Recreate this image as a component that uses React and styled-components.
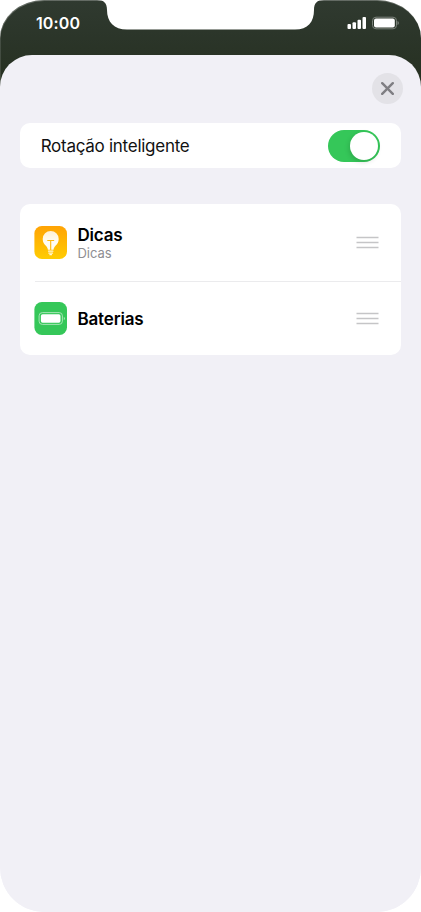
import React from "react";
import styled, { createGlobalStyle } from "styled-components";

const GlobalStyle = createGlobalStyle`
    * {
        box-sizing: border-box;
    }

    body {
        margin: 0;
        background: #fff;
        font-family: Inter, "Liberation Sans", sans-serif;
    }
`;

const Phone = styled.div`
    position: relative;
    display: flex;
    flex-direction: column;
    width: 421px;
    height: 912px;
    overflow: hidden;
    border-radius: 44px 44px 44px 44px / 38px 38px 45px 45px;
    background: linear-gradient(
        #303a30 0px,
        #2b3529 38px,
        #263020 85px,
        #263020 100px,
        #f1f0f6 100px
    );
    box-shadow: inset 0.5px 1px 0 rgba(255, 255, 255, 0.25);
`;

const Notch = styled.svg`
    position: absolute;
    top: 0;
    left: 97px;
    width: 228px;
    height: 30px;
`;

const StatusBar = styled.div`
    display: flex;
    justify-content: space-between;
    align-items: flex-start;
    height: 55px;
    padding: 13px 21px 0 36px;
`;

const Time = styled.div`
    color: #fff;
    font-size: 16px;
    font-weight: 600;
    line-height: 20px;
    letter-spacing: 0.1px;
`;

const StatusIcons = styled.svg`
    width: 54px;
    height: 16px;
    margin-top: 2px;
`;

const Sheet = styled.main`
    flex: 1;
    padding: 18px 20.4px 0;
    border-radius: 32px 32px 0 0;
    background: #f1f0f6;
`;

const SheetHeader = styled.div`
    display: flex;
    justify-content: flex-end;
    height: 50px;
    margin-right: -2px;
`;

const CloseButton = styled.button`
    display: flex;
    justify-content: center;
    align-items: center;
    width: 31px;
    height: 31px;
    padding: 0;
    border: 0;
    border-radius: 50%;
    background: #e3e2e7;
`;

const Card = styled.section`
    width: 380.2px;
    margin-bottom: 36px;
    border-radius: 10px;
    background: #fff;
`;

const ToggleRow = styled.div`
    display: flex;
    justify-content: space-between;
    align-items: center;
    height: 45px;
    padding: 0 20.3px;
`;

const ToggleLabel = styled.div`
    color: #111;
    font-size: 17px;
    letter-spacing: -0.27px;
`;

const Switch = styled.button`
    display: flex;
    justify-content: flex-end;
    width: 52px;
    height: 32px;
    padding: 2px;
    border: 0;
    border-radius: 16px;
    background: #35c759;
`;

const Knob = styled.span`
    width: 28px;
    height: 28px;
    border-radius: 50%;
    background: #fff;
    box-shadow: -1px 2px 5px rgba(0, 0, 0, 0.15);
`;

const WidgetRow = styled.div`
    display: flex;
    align-items: center;
    height: ${props => props.$height}px;
    padding: 0 22px 0 14px;
`;

const Divider = styled.div`
    height: 1px;
    margin-left: 15px;
    background: #ebebed;
`;

const AppIcon = styled.svg`
    flex: none;
    width: 33px;
    height: 33px;
    margin-right: 10px;
`;

const WidgetText = styled.div`
    flex: 1;
`;

const WidgetName = styled.div`
    color: #000;
    font-size: 17px;
    font-weight: 600;
    line-height: 20px;
    letter-spacing: -0.15px;
`;

const WidgetApp = styled.div`
    color: #8e8e92;
    font-size: 13px;
    line-height: 16px;
`;

const Handle = styled.svg`
    width: 23px;
    height: 13px;
`;

const TipsIcon = () => (
    <AppIcon viewBox="0 0 33 33">
        <defs>
            <linearGradient id="tips" x1="0" y1="0" x2="0" y2="1">
                <stop offset="0" stopColor="#ffa305" />
                <stop offset="1" stopColor="#ffcc02" />
            </linearGradient>
            <linearGradient id="bulb" x1="0" y1="0" x2="0" y2="1">
                <stop offset="0" stopColor="#fff0d5" />
                <stop offset="0.6" stopColor="#fffdf6" />
            </linearGradient>
        </defs>
        <rect x="0.4" width="32.6" height="33" rx="7.5" fill="url(#tips)" />
        <path
            d="M16.7 5a8 8 0 0 0-8 8c0 3.2 1.5 4.9 3.2 6.8 1.3 1.5 1.7 2.2 2 4h5.6c.3-1.8.7-2.5 2-4 1.7-1.9 3.2-3.6 3.2-6.8a8 8 0 0 0-8-8z"
            fill="url(#bulb)"
        />
        <path
            d="M13.7 14.5h6M16.7 14.5v9.3"
            stroke="#ffb80a"
            strokeWidth="1.1"
            strokeLinecap="round"
        />
        <path
            d="M14.5 25.2h4.4M14.8 27.1h3.8M15.9 28.7h1.6"
            stroke="#fff7dc"
            strokeWidth="1.2"
            strokeLinecap="round"
        />
    </AppIcon>
);

const BatteriesIcon = () => (
    <AppIcon viewBox="0 0 33 33">
        <rect x="0.4" width="32.6" height="33" rx="7.5" fill="#35c759" />
        <rect
            x="5.1"
            y="10.6"
            width="23.3"
            height="11.8"
            rx="3.2"
            fill="none"
            stroke="#a5e5b4"
        />
        <rect x="6.9" y="12.3" width="19.6" height="8.4" rx="1.7" fill="#fff" />
        <path d="M29.8 15q1.2.3 1.2 1.5t-1.2 1.5z" fill="#a5e5b4" />
    </AppIcon>
);

const widgets = [
    { name: "Dicas", app: "Dicas", height: 77, Icon: TipsIcon },
    { name: "Baterias", height: 73, Icon: BatteriesIcon }
];

const App = () => (
    <>
        <GlobalStyle />
        <Phone>
            <StatusBar>
                <Time>10:00</Time>
                <StatusIcons viewBox="0 0 54 16">
                    <g fill="#fff">
                        <rect x="1.5" y="9" width="3.5" height="5" rx="1" />
                        <rect x="6.5" y="7.3" width="3.5" height="6.7" rx="1" />
                        <rect x="11.5" y="4.8" width="3.5" height="9.2" rx="1" />
                        <rect x="16.5" y="2" width="3.5" height="12" rx="1" />
                        <rect x="28" y="3.6" width="20.8" height="8.8" rx="2" />
                    </g>
                    <rect
                        x="26.5"
                        y="2.2"
                        width="24"
                        height="11.6"
                        rx="3.5"
                        fill="none"
                        stroke="#7b827a"
                    />
                    <path d="M51.5 6q1.4.5 1.4 2t-1.4 2z" fill="#7b827a" />
                </StatusIcons>
            </StatusBar>
            <Sheet>
                <SheetHeader>
                    <CloseButton aria-label="Fechar">
                        <svg width="13" height="13" viewBox="0 0 13 13">
                            <path
                                d="M1.2 1.2l10.6 10.6M11.8 1.2l-10.6 10.6"
                                stroke="#7f7e83"
                                strokeWidth="2.4"
                                strokeLinecap="round"
                            />
                        </svg>
                    </CloseButton>
                </SheetHeader>
                <Card>
                    <ToggleRow>
                        <ToggleLabel>Rotação inteligente</ToggleLabel>
                        <Switch role="switch" aria-checked="true">
                            <Knob />
                        </Switch>
                    </ToggleRow>
                </Card>
                <Card>
                    {widgets.map(({ name, app, height, Icon }, index) => (
                        <React.Fragment key={name}>
                            {index > 0 && <Divider />}
                            <WidgetRow $height={height}>
                                <Icon />
                                <WidgetText>
                                    <WidgetName>{name}</WidgetName>
                                    {app && <WidgetApp>{app}</WidgetApp>}
                                </WidgetText>
                                <Handle viewBox="0 0 23 13">
                                    <path
                                        d="M0.5 1.5h22M0.5 6.5h22M0.5 11.5h22"
                                        stroke="#c5c5c7"
                                        strokeWidth="1.3"
                                    />
                                </Handle>
                            </WidgetRow>
                        </React.Fragment>
                    ))}
                </Card>
            </Sheet>
            <Notch viewBox="0 0 228 30">
                <path
                    d="M0 0C7 0 10 3 10 10C10 22 17 29.5 30 29.5H198C211 29.5 217 22 217 10C217 3 220 0 227 0Z"
                    fill="#fff"
                />
            </Notch>
        </Phone>
    </>
);

export default App;
